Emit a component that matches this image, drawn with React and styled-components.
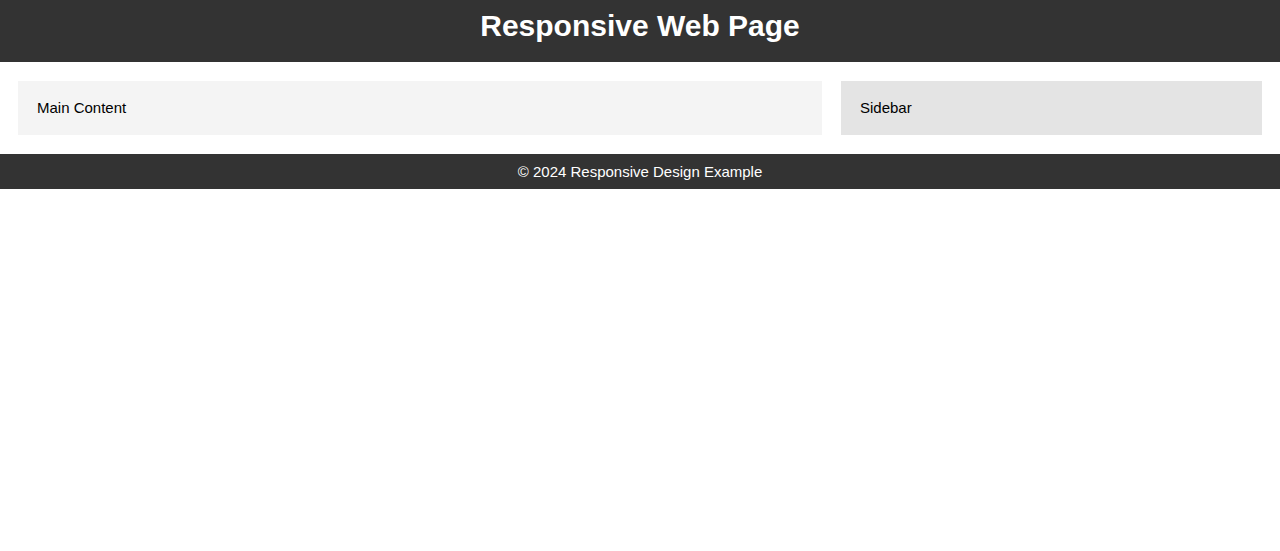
import styled, { createGlobalStyle } from "styled-components";

const GlobalStyle = createGlobalStyle`
  body {
    margin: 0;
    font-family: "Liberation Sans", Arial, sans-serif;
    background: #fff;
  }
`;

const Header = styled.header`
  background-color: #333;
  color: #fff;
  height: 62px;
  display: flex;
  align-items: center;
  justify-content: center;
`;

const Title = styled.h1`
  margin: 0;
  font-size: 30px;
  font-weight: bold;
  line-height: 1;
  padding-bottom: 10px;
`;

const Container = styled.div`
  display: flex;
  gap: 19px;
  padding: 19px 18px;
`;

const Panel = styled.div`
  background-color: ${(p) => p.$bg};
  padding: 18px 19px;
  font-size: 15px;
  line-height: 18px;
  color: #000;
  ${(p) => (p.$width ? `width: ${p.$width}px; flex: none;` : "flex: 1;")}
  box-sizing: border-box;
`;

const Footer = styled.footer`
  background-color: #333;
  color: #fff;
  height: 35px;
  display: flex;
  align-items: center;
  justify-content: center;
  font-size: 15px;
`;

function App() {
  return (
    <>
      <GlobalStyle />
      <Header>
        <Title>Responsive Web Page</Title>
      </Header>
      <Container>
        <Panel $bg="#f4f4f4">Main Content</Panel>
        <Panel $bg="#e4e4e4" $width={421}>Sidebar</Panel>
      </Container>
      <Footer>© 2024 Responsive Design Example</Footer>
    </>
  );
}

export default App;
